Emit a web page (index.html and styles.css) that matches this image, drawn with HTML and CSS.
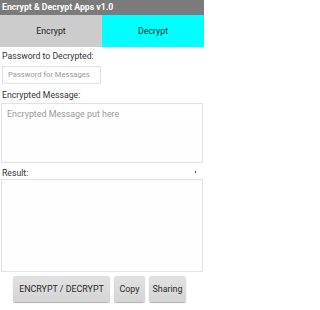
FILE: index.html
```html
<!DOCTYPE html>
<html>
<head>
<meta charset="utf-8">
<link rel="stylesheet" href="styles.css">
</head>
<body>
<div class="app">
  <div class="titlebar">Encrypt &amp; Decrypt Apps v1.0</div>
  <div class="tabs">
    <div class="tab tab-off">Encrypt</div>
    <div class="tab tab-on">Decrypt</div>
  </div>
  <div class="content">
    <div class="label label-pw">Password to Decrypted:</div>
    <div class="input pw">Password for Messages</div>
    <div class="label label-msg">Encrypted Message:</div>
    <div class="input msg">Encrypted Message put here</div>
    <div class="label result-row"><span>Result:</span><span class="dot"></span></div>
    <div class="input result"></div>
    <div class="buttons">
      <div class="btn btn-wide">ENCRYPT / DECRYPT</div>
      <div class="btn btn-copy">Copy</div>
      <div class="btn btn-share">Sharing</div>
    </div>
  </div>
</div>
</body>
</html>
```
FILE: styles.css
```css
html, body {
  margin: 0;
  padding: 0;
  background: #ffffff;
}
.app {
  width: 204px;
  height: 310px;
  font-family: Roboto, "Liberation Sans", sans-serif;
  overflow: hidden;
}
.titlebar {
  height: 15px;
  background: #7b7b7b;
  color: #ffffff;
  font-weight: bold;
  font-size: 8.7px;
  line-height: 14px;
  padding-left: 2px;
}
.tabs {
  display: flex;
  height: 32px;
}
.tab {
  flex: 1;
  display: flex;
  align-items: center;
  justify-content: center;
  font-size: 8.8px;
  color: #1e1e1e;
}
.tab-off {
  background: #cccccc;
}
.tab-on {
  background: #00ffff;
}
.content {
  padding: 0 1px;
}
.label {
  font-size: 8.7px;
  color: #333;
  line-height: 11px;
  padding-left: 1px;
}
.label-pw {
  margin-top: 4px;
}
.label-msg {
  margin-top: 6px;
}
.input {
  border: 1px solid #e3e3e3;
  background: #fefefe;
  box-shadow: inset 0 0 1px #e8e8e8;
  color: #9a9a9a;
  box-sizing: border-box;
}
.pw {
  width: 99px;
  height: 18px;
  margin: 4px 0 0 1px;
  font-size: 7.6px;
  line-height: 16px;
  padding-left: 5px;
}
.msg {
  height: 60px;
  margin-top: 2px;
  padding: 5px 0 0 5px;
  font-size: 8.9px;
  line-height: 11px;
}
.result-row {
  display: flex;
  justify-content: space-between;
  align-items: center;
  margin-top: 5px;
}
.dot {
  width: 1.5px;
  height: 1.5px;
  background: #444;
  margin-right: 7px;
  margin-top: -3px;
}
.result {
  height: 93px;
}
.buttons {
  display: flex;
  gap: 4px;
  margin-top: 4px;
  padding-left: 12px;
}
.btn {
  height: 26px;
  box-sizing: border-box;
  background: linear-gradient(#e2e2e2, #d4d4d4);
  border-radius: 2px;
  box-shadow: 0 1px 1px #b0b0b0;
  font-size: 8.9px;
  color: #2a2a2a;
  display: flex;
  align-items: center;
  justify-content: center;
}
.btn-wide { width: 97px; }
.btn-copy { width: 31px; }
.btn-share { width: 37px; }
```
